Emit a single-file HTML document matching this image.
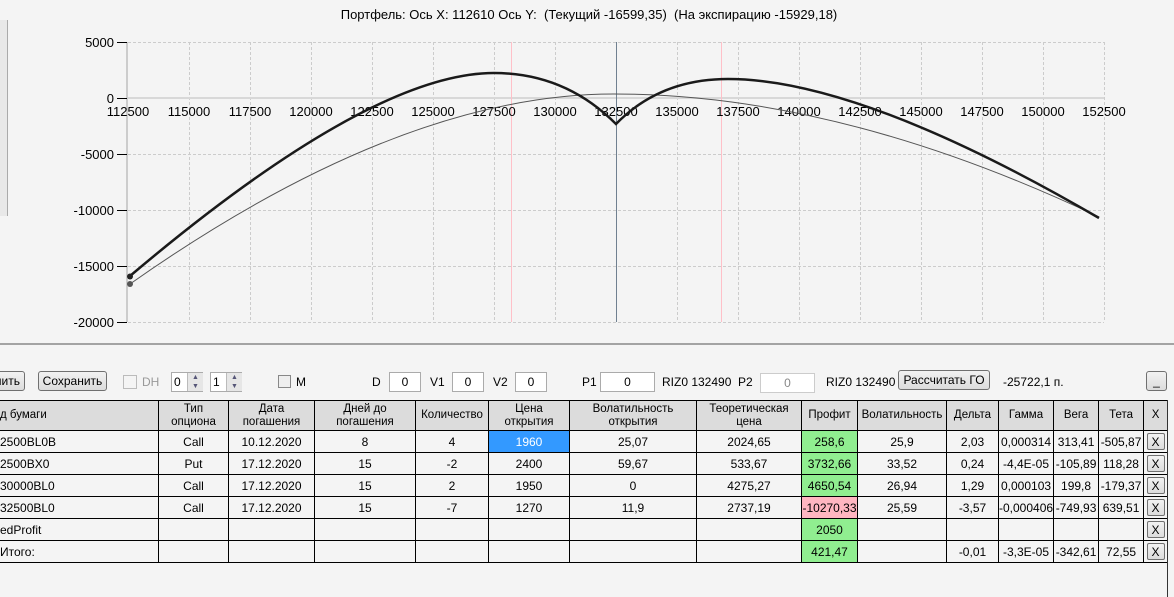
<!DOCTYPE html>
<html><head><meta charset="utf-8"><style>
body{margin:0;width:1174px;height:597px;background:#f4f4f4;font-family:"Liberation Sans",sans-serif;font-size:12px;color:#000;position:relative;overflow:hidden}
.a{position:absolute;white-space:nowrap}
.btn{position:absolute;height:20px;border:1px solid #707070;border-radius:3px;background:linear-gradient(#f2f2f2,#dcdcdc);box-sizing:border-box;text-align:center;line-height:18px}
.box{position:absolute;height:20px;border:1px solid #ababab;background:#fff;box-sizing:border-box;text-align:center;line-height:18px}
table{position:absolute;left:-1px;top:400px;border-collapse:collapse;table-layout:fixed}
td{border:1px solid #000;height:21px;padding:0;text-align:center;background:#f4f4f4;overflow:hidden;white-space:nowrap;font-size:12px}
tr.h td{background:#dcdcdc;height:29px;line-height:13px;font-size:11.5px}
.g{background:#90ee90!important}.r{background:#ffb6c1!important}.b{background:#3399ff!important;color:#fff}
.x{display:inline-block;width:18px;height:17px;border:1px solid #707070;border-radius:2px;background:linear-gradient(#f2f2f2,#dcdcdc);line-height:17px;box-sizing:border-box;vertical-align:middle}
</style></head><body>
<div class="a" style="left:0;top:20px;width:7px;height:196px;border-right:1px solid #aaa;background:#e8e8e8"></div>
<div class="a" style="left:0;top:7px;width:1174px;text-align:center;font-size:13px;padding-left:2px">Портфель: Ось X: 112610 Ось Y:&nbsp; (Текущий -16599,35)&nbsp; (На экспирацию -15929,18)</div>
<svg class="a" style="left:0;top:0" width="1174" height="345">
<g stroke="#ccc" stroke-dasharray="3,2" stroke-width="1">
<line x1="128" y1="42.5" x2="1104" y2="42.5"/><line x1="128" y1="154.5" x2="1104" y2="154.5"/><line x1="128" y1="210.5" x2="1104" y2="210.5"/><line x1="128" y1="266.5" x2="1104" y2="266.5"/><line x1="128" y1="322.5" x2="1104" y2="322.5"/>
<line x1="189.5" y1="42" x2="189.5" y2="322"/><line x1="250.5" y1="42" x2="250.5" y2="322"/><line x1="311.5" y1="42" x2="311.5" y2="322"/><line x1="372.5" y1="42" x2="372.5" y2="322"/><line x1="433.5" y1="42" x2="433.5" y2="322"/><line x1="494.5" y1="42" x2="494.5" y2="322"/><line x1="555.5" y1="42" x2="555.5" y2="322"/><line x1="616.5" y1="42" x2="616.5" y2="322"/><line x1="677.5" y1="42" x2="677.5" y2="322"/><line x1="738.5" y1="42" x2="738.5" y2="322"/><line x1="799.5" y1="42" x2="799.5" y2="322"/><line x1="860.5" y1="42" x2="860.5" y2="322"/><line x1="921.5" y1="42" x2="921.5" y2="322"/><line x1="982.5" y1="42" x2="982.5" y2="322"/><line x1="1043.5" y1="42" x2="1043.5" y2="322"/><line x1="1104.5" y1="42" x2="1104.5" y2="322"/>
</g>
<line x1="127" y1="42" x2="127" y2="322" stroke="#ccc" stroke-width="2"/>
<line x1="128" y1="98" x2="1104" y2="98" stroke="#d8d8d8" stroke-width="2"/>
<line x1="511.5" y1="42" x2="511.5" y2="322" stroke="#ffc0c8"/>
<line x1="721.5" y1="42" x2="721.5" y2="322" stroke="#ffc0c8"/>
<line x1="616.5" y1="42" x2="616.5" y2="322" stroke="#708090"/>
<g stroke="#000"><line x1="117" y1="42.5" x2="127" y2="42.5"/><line x1="117" y1="98.5" x2="127" y2="98.5"/><line x1="117" y1="154.5" x2="127" y2="154.5"/><line x1="117" y1="210.5" x2="127" y2="210.5"/><line x1="117" y1="266.5" x2="127" y2="266.5"/><line x1="117" y1="322.5" x2="127" y2="322.5"/></g>
<g font-family="Liberation Sans" font-size="13" text-anchor="end"><text x="114" y="47">5000</text><text x="114" y="103">0</text><text x="114" y="159">-5000</text><text x="114" y="215">-10000</text><text x="114" y="271">-15000</text><text x="114" y="327">-20000</text></g>
<g font-family="Liberation Sans" font-size="13" text-anchor="middle"><text x="128" y="116">112500</text><text x="189" y="116">115000</text><text x="250" y="116">117500</text><text x="311" y="116">120000</text><text x="372" y="116">122500</text><text x="433" y="116">125000</text><text x="494" y="116">127500</text><text x="555" y="116">130000</text><text x="616" y="116">132500</text><text x="677" y="116">135000</text><text x="738" y="116">137500</text><text x="799" y="116">140000</text><text x="860" y="116">142500</text><text x="921" y="116">145000</text><text x="982" y="116">147500</text><text x="1043" y="116">150000</text><text x="1104" y="116">152500</text></g>
<path d="M130,284 Q400,94 614,94 Q840,94 1099,217" fill="none" stroke="#555" stroke-width="1"/>
<path d="M130,276 Q370,73 494,73 Q565,73 616,124 Q660,79 728,79 Q860,79 1099,218" fill="none" stroke="#1a1a1a" stroke-width="2.5"/>
<circle cx="130" cy="276.5" r="3" fill="#222"/><circle cx="130" cy="284" r="3" fill="#555"/>
<line x1="0" y1="344" x2="1174" y2="344" stroke="#888" stroke-width="1.5"/>
<rect x="0" y="346" width="1174" height="4" fill="#ccc"/>
</svg>
<div class="btn" style="left:-8px;top:371px;width:33px;text-align:right;padding-right:4px">лить</div>
<div class="btn" style="left:38px;top:371px;width:69px">Сохранить</div>
<div class="a" style="left:123px;top:375px;width:12px;height:12px;border:1px solid #bbb;background:#f4f4f4"></div><div class="a" style="left:142px;top:375px;color:#999">DH</div>
<div class="box" style="left:171px;top:372px;width:32px;text-align:left;padding-left:2px">0</div><div class="a" style="left:187px;top:373px;width:15px;height:18px;background:#e6e6e6;border-left:1px solid #bbb;font-size:7px;line-height:9px;text-align:center;color:#557">▲<br>▼</div>
<div class="box" style="left:210px;top:372px;width:32px;text-align:left;padding-left:2px">1</div><div class="a" style="left:226px;top:373px;width:15px;height:18px;background:#e6e6e6;border-left:1px solid #bbb;font-size:7px;line-height:9px;text-align:center;color:#557">▲<br>▼</div>
<div class="a" style="left:278px;top:375px;width:11px;height:11px;border:1px solid #888;background:#eee"></div><div class="a" style="left:296px;top:375px">M</div>
<div class="a" style="left:372px;top:375px">D</div><div class="box" style="left:389px;top:372px;width:32px">0</div>
<div class="a" style="left:430px;top:375px">V1</div><div class="box" style="left:452px;top:372px;width:32px">0</div>
<div class="a" style="left:493px;top:375px">V2</div><div class="box" style="left:515px;top:372px;width:32px">0</div>
<div class="a" style="left:582px;top:375px">P1</div><div class="box" style="left:600px;top:372px;width:55px">0</div>
<div class="a" style="left:662px;top:375px">RIZ0 132490&nbsp; P2</div><div class="box" style="left:760px;top:373px;width:55px;color:#888;border-color:#ccc">0</div>
<div class="a" style="left:826px;top:375px">RIZ0 132490</div>
<div class="btn" style="left:898px;top:370px;width:92px">Рассчитать ГО</div>
<div class="a" style="left:1003px;top:375px">-25722,1 п.</div>
<div class="btn" style="left:1146px;top:371px;width:21px">_</div>
<table>
<colgroup><col style="width:159px"><col style="width:70px"><col style="width:86px"><col style="width:101px"><col style="width:73px"><col style="width:81px"><col style="width:127px"><col style="width:105px"><col style="width:56px"><col style="width:89px"><col style="width:52px"><col style="width:53px"><col style="width:45px"><col style="width:45px"><col style="width:24px"></colgroup>
<tr class="h"><td style="text-align:left">д бумаги</td><td>Тип<br>опциона</td><td>Дата<br>погашения</td><td>Дней до<br>погашения</td><td>Количество</td><td>Цена<br>открытия</td><td>Волатильность<br>открытия</td><td>Теоретическая<br>цена</td><td>Профит</td><td>Волатильность</td><td>Дельта</td><td>Гамма</td><td>Вега</td><td>Тета</td><td>X</td></tr>
<tr><td style="text-align:left">2500BL0B</td><td>Call</td><td>10.12.2020</td><td>8</td><td>4</td><td class="b">1960</td><td>25,07</td><td>2024,65</td><td class="g">258,6</td><td>25,9</td><td>2,03</td><td>0,000314</td><td>313,41</td><td>-505,87</td><td><span class="x">X</span></td></tr>
<tr><td style="text-align:left">2500BX0</td><td>Put</td><td>17.12.2020</td><td>15</td><td>-2</td><td>2400</td><td>59,67</td><td>533,67</td><td class="g">3732,66</td><td>33,52</td><td>0,24</td><td>-4,4E-05</td><td>-105,89</td><td>118,28</td><td><span class="x">X</span></td></tr>
<tr><td style="text-align:left">30000BL0</td><td>Call</td><td>17.12.2020</td><td>15</td><td>2</td><td>1950</td><td>0</td><td>4275,27</td><td class="g">4650,54</td><td>26,94</td><td>1,29</td><td>0,000103</td><td>199,8</td><td>-179,37</td><td><span class="x">X</span></td></tr>
<tr><td style="text-align:left">32500BL0</td><td>Call</td><td>17.12.2020</td><td>15</td><td>-7</td><td>1270</td><td>11,9</td><td>2737,19</td><td class="r">-10270,33</td><td>25,59</td><td>-3,57</td><td>-0,000406</td><td>-749,93</td><td>639,51</td><td><span class="x">X</span></td></tr>
<tr><td style="text-align:left">edProfit</td><td></td><td></td><td></td><td></td><td></td><td></td><td></td><td class="g">2050</td><td></td><td></td><td></td><td></td><td></td><td><span class="x">X</span></td></tr>
<tr><td style="text-align:left">Итого:</td><td></td><td></td><td></td><td></td><td></td><td></td><td></td><td class="g">421,47</td><td></td><td>-0,01</td><td>-3,3E-05</td><td>-342,61</td><td>72,55</td><td><span class="x">X</span></td></tr>
</table>
<div class="a" style="left:1167px;top:400px;width:1px;height:197px;background:#333"></div>
</body></html>
